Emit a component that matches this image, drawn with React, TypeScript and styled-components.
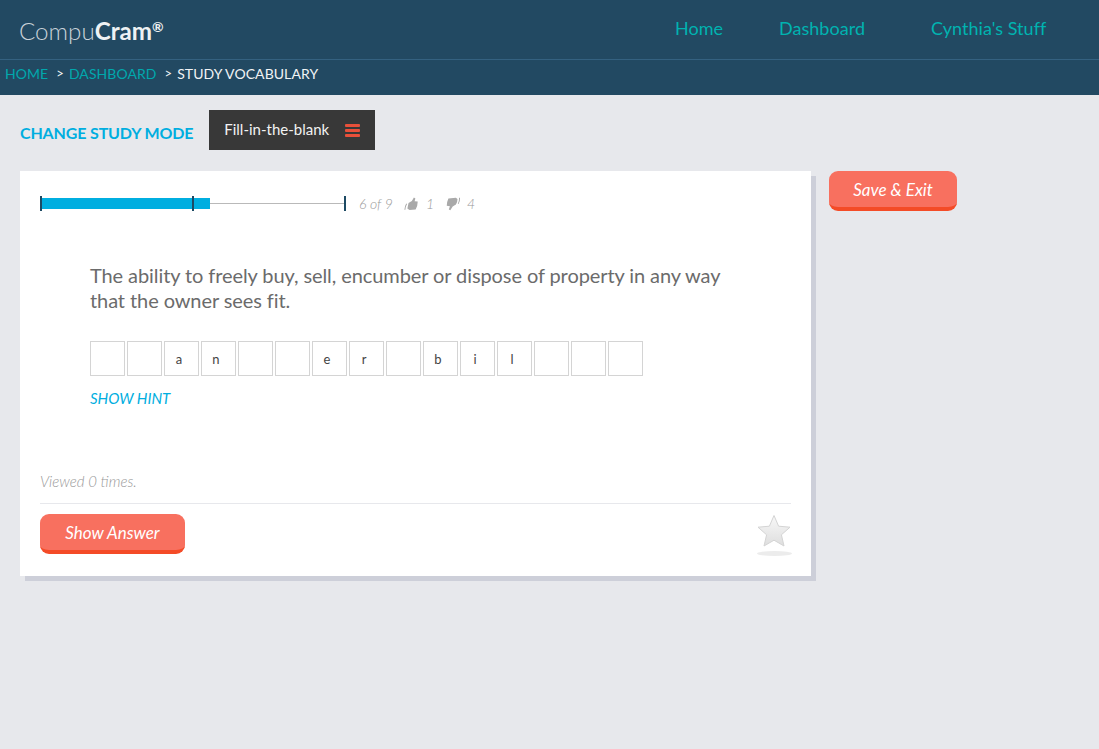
import styled, { createGlobalStyle } from "styled-components";

const GlobalStyle = createGlobalStyle`
  html, body {
    margin: 0;
    padding: 0;
    background: #e7e8ec;
    font-family: Lato, "Open Sans", sans-serif;
  }
  * {
    box-sizing: border-box;
  }
`;

const letters = ["", "", "a", "n", "", "", "e", "r", "", "b", "i", "l", "", "", ""];

export default function App() {
  return (
    <Page>
      <GlobalStyle />
      <Header>
        <TopBar>
          <Logo>
            Compu<strong>Cram</strong>
            <sup>®</sup>
          </Logo>
          <Nav>
            <NavLink $width={104}>Home</NavLink>
            <NavLink $width={152}>Dashboard</NavLink>
            <NavLink>Cynthia's Stuff</NavLink>
          </Nav>
        </TopBar>
        <Breadcrumb>
          <CrumbLink>HOME</CrumbLink>
          <Sep>&gt;</Sep>
          <CrumbLink>DASHBOARD</CrumbLink>
          <Sep>&gt;</Sep>
          <span>STUDY VOCABULARY</span>
        </Breadcrumb>
      </Header>

      <ModeRow>
        <ModeLabel>CHANGE STUDY MODE</ModeLabel>
        <ModeSelect>
          Fill-in-the-blank
          <Burger>
            <i />
            <i />
            <i />
          </Burger>
        </ModeSelect>
      </ModeRow>

      <Content>
        <Card>
          <ProgressRow>
            <Progress>
              <ProgressFill style={{ width: 169 }} />
              <Tick $left={0} />
              <Tick $left={152} />
              <Tick $left={304} />
            </Progress>
            <Stats>
              <span>6 of 9</span>
              <ThumbUp />
              <span>1</span>
              <ThumbDown />
              <span>4</span>
            </Stats>
          </ProgressRow>

          <Question>
            The ability to freely buy, sell, encumber or dispose of property in any way that the owner sees fit.
          </Question>

          <Boxes>
            {letters.map((letter, i) => (
              <LetterBox key={i}>{letter}</LetterBox>
            ))}
          </Boxes>
          <Hint>SHOW HINT</Hint>

          <Viewed>Viewed 0 times.</Viewed>
          <CardFooter>
            <CoralButton $width={145}>Show Answer</CoralButton>
            <Star />
          </CardFooter>
        </Card>
        <CoralButton $width={128}>Save &amp; Exit</CoralButton>
      </Content>
    </Page>
  );
}

const ThumbUp = () => (
  <ThumbIcon width="15" height="14" viewBox="0 0 15 14" fill="#a9a9a9">
    <path d="M4.4 6 L7.4 4 L9 0.6 L10.6 1.4 L10.2 4.2 L13.4 4.6 Q14 9 12.4 12.6 L6.4 13 L4 11.4 Z" />
    <path d="M2.2 6.6 L3 6.9 Q1.9 9.6 2.2 12.8 L1.2 12.8 Q0.8 9.4 2.2 6.6 Z" />
  </ThumbIcon>
);

const ThumbDown = () => (
  <ThumbIcon width="15" height="14" viewBox="0 0 15 14" fill="#a9a9a9">
    <path d="M1.6 1.4 L9 0.8 L10.8 2 Q11.2 5 10 7.4 L7 9.4 L5.2 13.2 L3.6 12.4 L4.2 9.2 L1 8.8 Q0.4 5 1.6 1.4 Z" />
    <path d="M12.2 0.8 L13.2 0.8 Q13.8 3.8 12.6 7 L11.8 6.8 Q12.8 3.8 12.2 0.8 Z" />
  </ThumbIcon>
);

const Star = () => (
  <StarWrap>
    <svg width="36" height="34" viewBox="0 0 36 34">
      <defs>
        <linearGradient id="starFill" x1="0" y1="0" x2="0" y2="1">
          <stop offset="0" stopColor="#f8f8f8" />
          <stop offset="1" stopColor="#dedede" />
        </linearGradient>
      </defs>
      <path
        d="M18 1.5 L22.6 12.2 L34 13.2 L25.4 20.8 L28 32 L18 26.2 L8 32 L10.6 20.8 L2 13.2 L13.4 12.2 Z"
        fill="url(#starFill)"
        stroke="#d4d4d4"
        strokeWidth="1"
      />
    </svg>
    <StarShadow />
  </StarWrap>
);

const Page = styled.div`
  min-height: 749px;
  background: #e7e8ec;
`;

const Header = styled.header`
  background: #224962;
  height: 95px;
`;

const TopBar = styled.div`
  height: 60px;
  border-bottom: 1px solid #346180;
  display: flex;
  align-items: center;
  justify-content: space-between;
  padding-left: 19px;
`;

const Logo = styled.div`
  color: #c9d2d9;
  font-size: 24.2px;
  font-weight: 300;
  padding-top: 2px;

  strong {
    color: #eef1f3;
    font-weight: 700;
  }

  sup {
    color: #eef1f3;
    font-size: 14px;
    font-weight: 700;
    line-height: 0;
    vertical-align: 8px;
  }
`;

const Nav = styled.nav`
  display: flex;
  width: 424px;
  padding-bottom: 4px;
`;

const NavLink = styled.a<{ $width?: number }>`
  color: #00b3b0;
  font-size: 18px;
  letter-spacing: 0.03px;
  white-space: nowrap;
  flex: 0 0 ${({ $width }) => ($width ? `${$width}px` : "auto")};
`;

const Breadcrumb = styled.div`
  height: 35px;
  display: flex;
  align-items: center;
  padding: 0 0 9px 5px;
  color: #f1f3f5;
  font-size: 14px;
  letter-spacing: 0.07px;
  white-space: nowrap;
`;

const CrumbLink = styled.a`
  color: #00a8ad;
`;

const Sep = styled.span`
  margin: 0 5px 0 8px;
  color: #f1f3f5;
  font-size: 13px;
`;

const ModeRow = styled.div`
  display: flex;
  align-items: center;
  gap: 16px;
  padding: 15px 20px 0;
`;

const ModeLabel = styled.div`
  color: #00aee0;
  font-size: 16px;
  font-weight: 700;
  letter-spacing: -0.15px;
  padding-top: 5px;
  white-space: nowrap;
`;

const ModeSelect = styled.div`
  width: 166px;
  height: 40px;
  background: #383838;
  color: #f2f2f2;
  font-size: 15px;
  display: flex;
  align-items: center;
  justify-content: space-between;
  padding: 0 15px 2px;
`;

const Burger = styled.span`
  display: flex;
  flex-direction: column;
  gap: 2px;
  margin-top: 2px;

  i {
    display: block;
    width: 15px;
    height: 3px;
    border-radius: 1px;
    background: #e8503a;
  }
`;

const Content = styled.main`
  display: flex;
  align-items: flex-start;
  gap: 18px;
  padding: 21px 20px 0;
`;

const Card = styled.section`
  width: 791px;
  height: 405px;
  background: #fff;
  box-shadow: 5px 5px 0 #cdcfd9;
  padding: 25px 20px 0;
  display: flex;
  flex-direction: column;
`;

const ProgressRow = styled.div`
  display: flex;
  align-items: center;
  height: 15px;
`;

const Progress = styled.div`
  position: relative;
  width: 306px;
  height: 15px;
  margin-right: 13px;

  &::before {
    content: "";
    position: absolute;
    left: 0;
    right: 0;
    top: 7px;
    height: 1px;
    background: #b9b9b9;
  }
`;

const ProgressFill = styled.div`
  position: absolute;
  left: 1px;
  top: 2px;
  height: 11px;
  background: #00aee0;
`;

const Tick = styled.i<{ $left: number }>`
  position: absolute;
  left: ${({ $left }) => $left}px;
  top: 0;
  width: 2px;
  height: 15px;
  background: #1d4a64;
`;

const Stats = styled.div`
  display: flex;
  align-items: center;
  gap: 7.5px;
  color: #999;
  font-size: 14px;
  font-style: italic;
  font-weight: 300;
`;

const ThumbIcon = styled.svg`
  flex: none;
  margin-left: 4px;
  margin-right: -1px;
  transform: skewX(-8deg);
`;

const Question = styled.p`
  margin: 52px 0 0 50px;
  width: 650px;
  color: #6b6b6b;
  font-size: 20px;
  letter-spacing: -0.09px;
  line-height: 25px;
`;

const Boxes = styled.div`
  display: flex;
  gap: 2px;
  margin: 28px 0 0 50px;
`;

const LetterBox = styled.div`
  width: 35px;
  height: 35px;
  border: 1px solid #d4d4d4;
  color: #444;
  font-size: 13px;
  display: flex;
  align-items: center;
  justify-content: center;
  padding-right: 5px;
`;

const Hint = styled.a`
  margin: 14px 0 0 50px;
  color: #00aee0;
  font-size: 15px;
  font-style: italic;
  line-height: 17px;
`;

const Viewed = styled.div`
  margin-top: 66px;
  color: #999;
  font-size: 15px;
  font-style: italic;
  font-weight: 300;
  line-height: 16px;
`;

const CardFooter = styled.div`
  margin-top: 14px;
  border-top: 1px solid #e7e8ec;
  padding-top: 10px;
  display: flex;
  justify-content: space-between;
  align-items: flex-start;
`;

const CoralButton = styled.button<{ $width: number }>`
  width: ${({ $width }) => $width}px;
  height: 40px;
  flex: none;
  border: 0;
  border-bottom: 4px solid #f44b27;
  border-radius: 9px;
  background: #f8705f;
  color: #fff;
  font-family: inherit;
  font-size: 17px;
  font-style: italic;
  font-weight: 400;
  padding: 0;
`;

const StarWrap = styled.div`
  width: 36px;
  display: flex;
  flex-direction: column;
  align-items: center;
  margin-right: -1px;

  svg {
    display: block;
  }
`;

const StarShadow = styled.div`
  width: 35px;
  height: 5px;
  margin-top: 3px;
  border-radius: 50%;
  background: #ececec;
`;
